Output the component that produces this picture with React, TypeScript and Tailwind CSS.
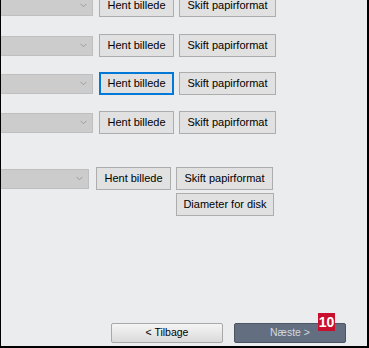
import React from "react";

const font = { fontFamily: '"Liberation Sans", Arial, sans-serif' };

function Combo({ w }: { w: string }) {
  return (
    <div className={`${w} h-[20px] shrink-0 bg-[#cccccc] border border-[#bfbfbf] border-l-0 flex items-center justify-end pr-[5px]`}>
      <svg width="7" height="5" viewBox="0 0 7 5">
        <path d="M0.5 0.8 L3.5 3.8 L6.5 0.8" fill="none" stroke="#9a9a9a" strokeWidth="1" />
      </svg>
    </div>
  );
}

function Btn({ label, w, focused }: { label: string; w: string; focused?: boolean }) {
  return (
    <div
      className={`${w} h-[23px] shrink-0 bg-[#e1e1e1] flex items-center justify-center text-[11px] text-black ${
        focused ? "border-2 border-[#0078d7]" : "border border-[#adadad]"
      }`}
      style={font}
    >
      {label}
    </div>
  );
}

function Row({ mt, focused }: { mt: string; focused?: boolean }) {
  return (
    <div className={`flex items-center ${mt}`}>
      <Combo w="w-[92px]" />
      <div className="w-[6px]" />
      <Btn label="Hent billede" w="w-[75px]" focused={focused} />
      <div className="w-[5px]" />
      <Btn label="Skift papirformat" w="w-[97px]" />
    </div>
  );
}

export default function App() {
  return (
    <div className="w-[369px] h-[348px] bg-[#ebecee] border-l border-r-2 border-b-2 border-black overflow-hidden flex flex-col">
      <Row mt="mt-[-6px]" />
      <Row mt="mt-[17px]" />
      <Row mt="mt-[15px]" focused />
      <Row mt="mt-[16px]" />
      <div className="flex items-center mt-[33px]">
        <Combo w="w-[88px]" />
        <div className="w-[7px]" />
        <Btn label="Hent billede" w="w-[75px]" />
        <div className="w-[5px]" />
        <Btn label="Skift papirformat" w="w-[97px]" />
      </div>
      <div className="flex mt-[3px] pl-[175px]">
        <Btn label="Diameter for disk" w="w-[98px]" />
      </div>
      <div className="flex mt-auto mb-[3px] pl-[110px] gap-[11px]">
        <div
          className="w-[112px] h-[20px] rounded-[2px] border border-[#a9a9a9] bg-gradient-to-b from-[#f5f5f5] to-[#dadada] flex items-center justify-center text-[10.5px] text-black"
          style={font}
        >
          &lt; Tilbage
        </div>
        <div className="relative">
          <div
            className="w-[112px] h-[20px] rounded-[2px] border border-[#4d5565] bg-[#636e80] flex items-center justify-center text-[10.5px] text-[#d4d8de]"
            style={font}
          >
            Næste &gt;
          </div>
          <div
            className="absolute left-[84px] top-[-10px] w-[17px] h-[18px] bg-[#c8102e] text-white text-[14px] font-bold flex items-center justify-center leading-none"
            style={font}
          >
            10
          </div>
        </div>
      </div>
    </div>
  );
}
